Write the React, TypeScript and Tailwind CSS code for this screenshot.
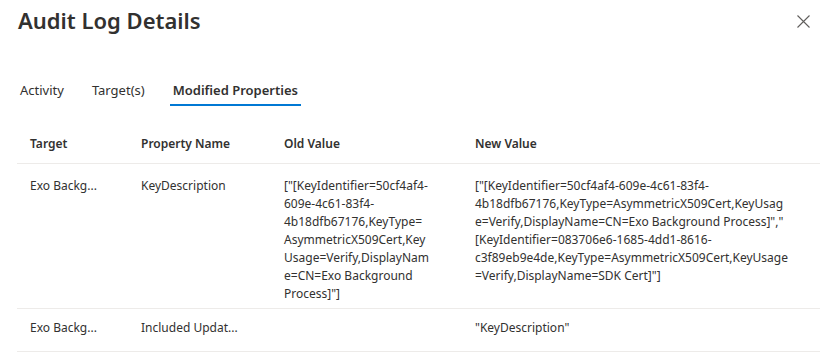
import React from "react";

const font = "font-['Segoe_UI','Noto_Sans',sans-serif]";

const oldValue = [
  '["[KeyIdentifier=50cf4af4-',
  "609e-4c61-83f4-",
  "4b18dfb67176,KeyType=",
  "AsymmetricX509Cert,Key",
  "Usage=Verify,DisplayNam",
  "e=CN=Exo Background",
  'Process]"]',
];

const newValue = [
  '["[KeyIdentifier=50cf4af4-609e-4c61-83f4-',
  "4b18dfb67176,KeyType=AsymmetricX509Cert,KeyUsag",
  'e=Verify,DisplayName=CN=Exo Background Process]","',
  "[KeyIdentifier=083706e6-1685-4dd1-8616-",
  "c3f89eb9e4de,KeyType=AsymmetricX509Cert,KeyUsage",
  '=Verify,DisplayName=SDK Cert]"]',
];

const Lines = ({ lines }: { lines: string[] }) => (
  <div>
    {lines.map((l, i) => (
      <div key={i} className="whitespace-nowrap">
        {l}
      </div>
    ))}
  </div>
);

export default function App() {
  const cols = "grid grid-cols-[112px_142px_191px_1fr]";
  return (
    <div className={`${font} w-[840px] h-[360px] bg-white text-[#323130] overflow-hidden`}>
      {/* header */}
      <div className="flex items-start justify-between pl-[18px] pr-[30px] pt-[4px]">
        <h1 className="text-[22px] font-semibold leading-[32px]">Audit Log Details</h1>
        <button className="mt-[11px] text-[#605e5c]">
          <svg width="13" height="13" viewBox="0 0 13 13" fill="none" stroke="currentColor" strokeWidth="1.1">
            <path d="M0.5 0.5L12.5 12.5M12.5 0.5L0.5 12.5" />
          </svg>
        </button>
      </div>

      {/* tabs */}
      <div className="flex gap-[28px] pl-[20px] mt-[39px] text-[13px]">
        <div className="py-[6px]">Activity</div>
        <div className="py-[6px]">Target(s)</div>
        <div className="relative py-[6px] px-[3px] -ml-[3px] font-semibold">
          Modified Properties
          <div className="absolute left-0 right-0 bottom-[1px] h-[2px] bg-[#0078d4]" />
        </div>
      </div>

      {/* table */}
      <div className="ml-[17px] mr-[20px] mt-[28px] text-[12px] leading-[18px]">
        <div className={`${cols} font-semibold border-b border-[#edebe9] pb-[10px]`}>
          <div className="pl-[13px]">Target</div>
          <div className="pl-[12px]">Property Name</div>
          <div className="pl-[13px]">Old Value</div>
          <div className="pl-[13px]">New Value</div>
        </div>
        <div className={`${cols} border-b border-[#edebe9] pt-[13px] pb-[5px]`}>
          <div className="pl-[13px]">Exo Backg...</div>
          <div className="pl-[12px]">KeyDescription</div>
          <div className="pl-[13px]">
            <Lines lines={oldValue} />
          </div>
          <div className="pl-[13px]">
            <Lines lines={newValue} />
          </div>
        </div>
        <div className={`${cols} border-b border-[#edebe9] pt-[10px] pb-[14px]`}>
          <div className="pl-[13px]">Exo Backg...</div>
          <div className="pl-[12px]">Included Updat...</div>
          <div className="pl-[13px]"></div>
          <div className="pl-[13px]">"KeyDescription"</div>
        </div>
      </div>
    </div>
  );
}
